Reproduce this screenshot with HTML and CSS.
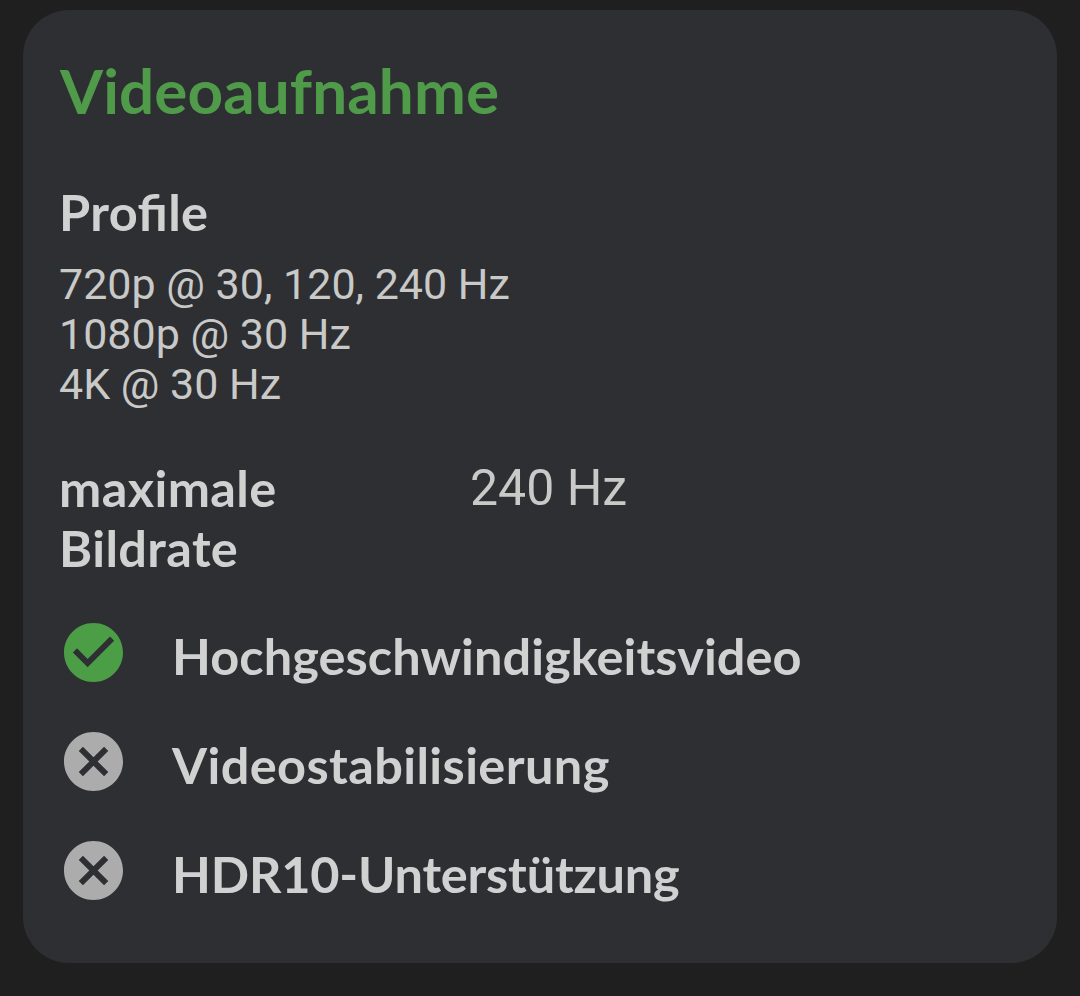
FILE: index.html
```html
<!DOCTYPE html>
<html lang="de">
<head>
  <meta charset="UTF-8" />
  <meta name="viewport" content="width=device-width, initial-scale=1.0"/>
  <title>Videoaufnahme</title>
  <link rel="stylesheet" href="styles.css">
</head>
<body>
  <div class="card">
    <h1 class="title">Videoaufnahme</h1>

    <h2 class="label">Profile</h2>
    <div class="profiles">
      <div>720p @ 30, 120, 240 Hz</div>
      <div>1080p @ 30 Hz</div>
      <div>4K @ 30 Hz</div>
    </div>

    <div class="row">
      <div class="label row-label">maximale Bildrate</div>
      <div class="value">240 Hz</div>
    </div>

    <ul class="features">
      <li class="feature">
        <svg class="icon yes" viewBox="2 2 20 20"><path d="M12 2C6.48 2 2 6.48 2 12s4.48 10 10 10 10-4.48 10-10S17.52 2 12 2zm-2 15l-5-5 1.41-1.41L10 14.17l7.59-7.59L19 8l-9 9z"/></svg>
        <span class="label highspeed">Hochgeschwindigkeitsvideo</span>
      </li>
      <li class="feature">
        <svg class="icon no" viewBox="2 2 20 20"><path d="M12 2C6.47 2 2 6.47 2 12s4.47 10 10 10 10-4.47 10-10S17.53 2 12 2zm5 13.59L15.59 17 12 13.41 8.41 17 7 15.59 10.59 12 7 8.41 8.41 7 12 10.59 15.59 7 17 8.41 13.41 12 17 15.59z"/></svg>
        <span class="label">Videostabilisierung</span>
      </li>
      <li class="feature">
        <svg class="icon no" viewBox="2 2 20 20"><path d="M12 2C6.47 2 2 6.47 2 12s4.47 10 10 10 10-4.47 10-10S17.53 2 12 2zm5 13.59L15.59 17 12 13.41 8.41 17 7 15.59 10.59 12 7 8.41 8.41 7 12 10.59 15.59 7 17 8.41 13.41 12 17 15.59z"/></svg>
        <span class="label hdr">HDR10-Unterstützung</span>
      </li>
    </ul>
  </div>
</body>
</html>
```

FILE: styles.css
```css
* {
  box-sizing: border-box;
}

body {
  margin: 0;
  padding: 10px 23px 33px;
  background: #1f1f1f;
  color: #c9c9c8;
  font-family: Roboto, sans-serif;
}

.card {
  height: 953px;
  padding: 43px 37px 0;
  background: #2e2f33;
  border-radius: 46px;
}

.title {
  margin: 0;
  color: #4f9b49;
  font-family: Lato, sans-serif;
  font-size: 62px;
  font-weight: bold;
  letter-spacing: 0.1px;
  line-height: 74px;
}

.label {
  margin: 0 0 0 -1px;
  color: #d1d1d1;
  font-family: Lato, sans-serif;
  font-size: 50.5px;
  font-weight: bold;
  font-feature-settings: "liga";
  letter-spacing: 0.38px;
  line-height: 60px;
}

.highspeed {
  letter-spacing: 0.06px;
}

.hdr {
  letter-spacing: -0.2px;
}

h2.label {
  margin-top: 55px;
}

.profiles {
  margin: 17px 0 0 -1px;
  font-size: 43px;
  line-height: 50px;
}

.row {
  display: flex;
  margin-top: 49px;
}

.row-label {
  width: 411px;
  padding-right: 150px;
}

.value {
  padding-top: 1px;
  font-size: 50px;
  line-height: 58px;
}

.features {
  margin: 48px 0 0;
  padding: 0;
  list-style: none;
}

.feature {
  display: flex;
  align-items: center;
  gap: 50px;
  height: 60px;
  margin-bottom: 49px;
  padding-left: 4px;
}

.icon {
  width: 59px;
  height: 59px;
  margin-top: -7px;
}

.yes {
  fill: #4c9e46;
}

.no {
  fill: #acacac;
}
```
